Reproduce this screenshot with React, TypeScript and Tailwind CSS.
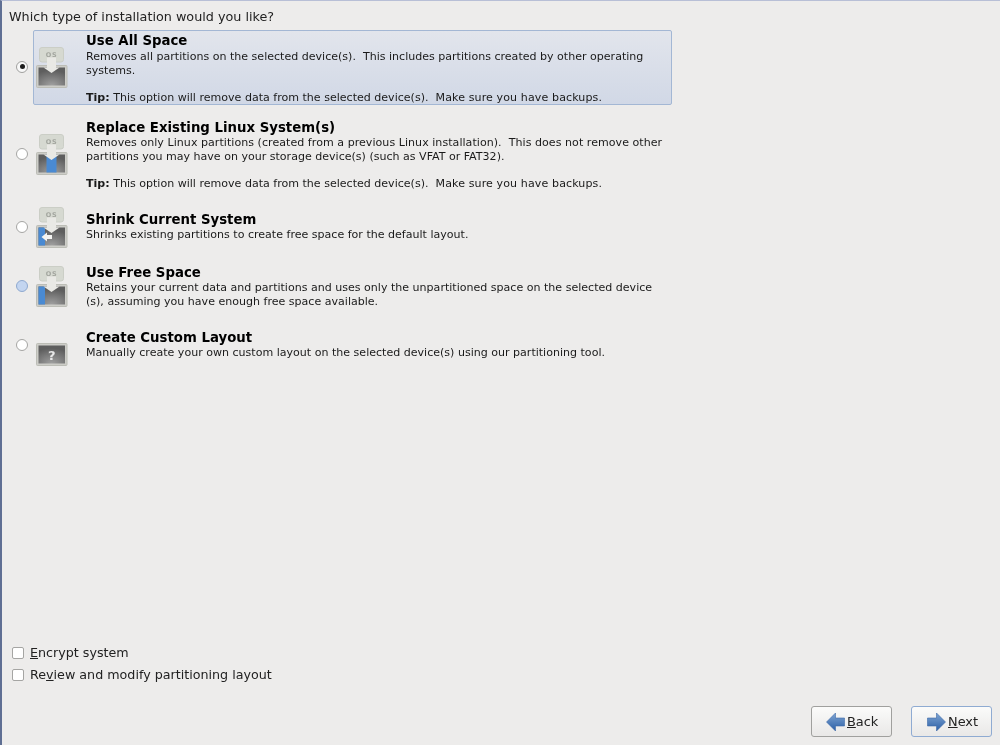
import React from "react";

type Kind = "all" | "replace" | "shrink" | "free" | "custom";

function DiskIcon({ kind, id }: { kind: Kind; id: string }) {
  return (
    <svg width="32" height="42" viewBox="0 0 32 42" className="shrink-0">
      <defs>
        <radialGradient id={id} cx="0.5" cy="1" r="0.85">
          <stop offset="0" stopColor="#a0a0a0" />
          <stop offset="1" stopColor="#5e5e5e" />
        </radialGradient>
      </defs>
      <rect x="0.5" y="19.5" width="30.5" height="22" rx="1" fill="#cdcdc8" stroke="#bcbdb6" />
      <rect x="2.5" y="21.5" width="26.5" height="18" fill={`url(#${id})`} />
      {kind === "replace" && <rect x="10.5" y="21.5" width="10" height="18" fill="#4a8ad2" />}
      {(kind === "shrink" || kind === "free") && <rect x="2.5" y="21.5" width="6.5" height="18" fill="#4a8ad2" />}
      {kind === "custom" ? (
        <text x="15.7" y="36" textAnchor="middle" fontSize="13" fontWeight="700" fill="#e8e8e8" fontFamily="'DejaVu Sans', sans-serif">?</text>
      ) : (
        <>
          <rect x="3.5" y="1.5" width="24" height="14.5" rx="2.5" fill="#d6d9d1" stroke="#cbcec6" />
          <text x="15.5" y="10.5" textAnchor="middle" fontSize="6.5" fontWeight="700" letterSpacing="0.6" fill="#a3a69f" fontFamily="'DejaVu Sans', sans-serif">OS</text>
          <path d="M11 11.5 H20 V21.5 H23.5 L15.5 27 L7.5 21.5 H11 Z" fill="#e9e9e5" />
        </>
      )}
      {kind === "shrink" && <path d="M5.5 31 L11 26.5 V29 H16 V33 H11 V35.5 Z" fill="#f4f4f2" />}
    </svg>
  );
}

function Radio({ state, lift }: { state: "on" | "off" | "hover"; lift?: boolean }) {
  const cls =
    state === "hover"
      ? "bg-[#c3d5f0] border-[#8fa9cf]"
      : state === "on"
        ? "bg-[#f8f8f8] border-[#a0a09e]"
        : "bg-white border-[#a5a5a3]";
  return (
    <div className={`w-[12px] h-[12px] ml-[14px] mr-[5px] shrink-0 flex items-center justify-center ${lift ? "mb-[2px]" : ""}`}>
      <div className={`w-[12px] h-[12px] rounded-full border flex items-center justify-center ${cls}`}>
        {state === "on" && <div className="w-[5px] h-[5px] rounded-full bg-[#1c1c1c]" />}
      </div>
    </div>
  );
}

function Row({
  title,
  kind,
  radio,
  lines,
  selected,
  lift,
  className,
}: {
  title: string;
  kind: Kind;
  radio: "on" | "off" | "hover";
  lines: React.ReactNode[];
  selected?: boolean;
  lift?: boolean;
  className: string;
}) {
  return (
    <div className={`flex items-center ${className}`}>
      <Radio state={radio} lift={lift} />
      <div
        className={`flex items-center w-[639px] h-full rounded-[2px] border ${
          selected ? "border-[#a3b7d4] bg-gradient-to-b from-[#e2e5ec] to-[#d1d8e6]" : "border-transparent"
        }`}
      >
        <div className={`ml-[2px] w-[50px] shrink-0 ${lift ? "mb-[2px]" : ""}`}>
          <DiskIcon kind={kind} id={`grad-${kind}`} />
        </div>
        <div className={`self-start ${selected ? "pt-[1px]" : "pt-[2px]"}`}>
          <div className={`text-[13.3px] font-bold text-black ${selected ? "leading-[18px]" : "leading-[17.3px]"}`}>{title}</div>
          <div className="text-[11.05px] leading-[13.67px] text-[#1a1a1a] whitespace-pre">
            {lines.map((l, i) => (
              <div key={i} className="h-[13.67px]">{l}</div>
            ))}
          </div>
        </div>
      </div>
    </div>
  );
}

function Check({ children }: { children: React.ReactNode }) {
  return (
    <div className="flex items-center h-[22px] pl-[10px]">
      <div className="w-[12px] h-[12px] rounded-[2px] border border-[#a5a5a3] bg-white shrink-0" />
      <span className="ml-[6px] text-[12.7px] text-[#222]">{children}</span>
    </div>
  );
}

function Arrow({ dir, id }: { dir: "left" | "right"; id: string }) {
  return (
    <svg width="19" height="20" viewBox="0 0 19 20" className="shrink-0">
      <defs>
        <linearGradient id={id} x1="0" y1="0" x2="0" y2="1">
          <stop offset="0" stopColor="#7fa5d3" />
          <stop offset="1" stopColor="#2b5fa6" />
        </linearGradient>
      </defs>
      <path
        d={dir === "left" ? "M0.5 10 L9.5 1 V6 H18.5 V14 H9.5 V19 Z" : "M18.5 10 L9.5 1 V6 H0.5 V14 H9.5 V19 Z"}
        fill={`url(#${id})`}
        stroke="#3c6aa8"
        strokeWidth="0.6"
      />
    </svg>
  );
}

const Tip = () => (
  <>
    <b>Tip:</b> This option will remove data from the selected device(s).  <span className="tracking-[0.11px]">Make sure you have backups.</span>
  </>
);

export default function App() {
  return (
    <div className="w-[1000px] h-[745px] flex flex-col bg-[#edeceb] border-l-2 border-l-[#5f6f93] border-t border-t-[#b8bfd6] overflow-hidden font-['DejaVu_Sans',sans-serif] blur-[0.45px]">
      <div className="pl-[7px] pt-[7px] h-[29px] text-[12.78px] leading-[18px] text-[#222]">
        Which type of installation would you like?
      </div>
      <div className="flex flex-col gap-[15px]">
        <Row
          className="h-[75px] mb-[-4px]"
          selected
          lift
          kind="all"
          radio="on"
          title="Use All Space"
          lines={[
            "Removes all partitions on the selected device(s).  This includes partitions created by other operating",
            "systems.",
            "",
            <Tip />,
          ]}
        />
        <Row
          className="h-[77px]"
          lift
          kind="replace"
          radio="off"
          title="Replace Existing Linux System(s)"
          lines={[
            <span className="tracking-[0.04px]">Removes only Linux partitions (created from a previous Linux installation).  This does not remove other</span>,
            "partitions you may have on your storage device(s) (such as VFAT or FAT32).",
            "",
            <Tip />,
          ]}
        />
        <Row
          className="h-[38px]"
          kind="shrink"
          radio="off"
          title="Shrink Current System"
          lines={["Shrinks existing partitions to create free space for the default layout."]}
        />
        <Row
          className="h-[50px]"
          kind="free"
          radio="hover"
          title="Use Free Space"
          lines={[
            "Retains your current data and partitions and uses only the unpartitioned space on the selected device",
            "(s), assuming you have enough free space available.",
          ]}
        />
        <Row
          className="h-[38px]"
          kind="custom"
          radio="off"
          title="Create Custom Layout"
          lines={["Manually create your own custom layout on the selected device(s) using our partitioning tool."]}
        />
      </div>
      <div className="mt-auto">
        <Check>
          <span className="underline">E</span>ncrypt system
        </Check>
        <Check>
          Re<span className="underline">v</span>iew and modify partitioning layout
        </Check>
      </div>
      <div className="flex justify-end gap-[19px] pr-[8px] pt-[20px] pb-[8px]">
        <button className="w-[81px] h-[31px] flex items-center justify-start pl-[14px] gap-[2px] rounded-[3px] border border-[#a0a09e] bg-gradient-to-b from-[#fbfbfa] to-[#e9e8e7] text-[12.9px] text-[#222]">
          <Arrow dir="left" id="arrow-back" />
          <span><span className="underline">B</span>ack</span>
        </button>
        <button className="w-[81px] h-[31px] flex items-center justify-start pl-[15px] gap-[2px] rounded-[3px] border border-[#8fabd2] bg-gradient-to-b from-[#fbfbfa] to-[#e9e8e7] text-[12.9px] text-[#222]">
          <Arrow dir="right" id="arrow-next" />
          <span><span className="underline">N</span>ext</span>
        </button>
      </div>
    </div>
  );
}
